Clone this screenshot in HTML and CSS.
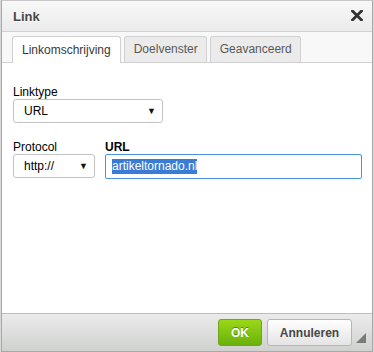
FILE: index.html
```html
<!DOCTYPE html>
<html lang="nl">
<head>
<meta charset="UTF-8">
<title>Link</title>
<link rel="stylesheet" href="styles.css">
</head>
<body>
<div class="dialog">
    <div class="title">
        <span>Link</span>
        <svg class="close" width="12" height="11" viewBox="0 0 12 11">
            <path d="M1.5 1 L10.5 10 M10.5 1 L1.5 10" stroke="#333" stroke-width="2.8" stroke-linecap="square"/>
        </svg>
    </div>
    <div class="tabs">
        <div class="tab active">Linkomschrijving</div>
        <div class="tab">Doelvenster</div>
        <div class="tab">Geavanceerd</div>
    </div>
    <div class="contents">
        <div class="field">
            <label>Linktype</label>
            <div class="select wide"><span>URL</span><span class="arrow">&#9660;</span></div>
        </div>
        <div class="row">
            <div class="field">
                <label>Protocol</label>
                <div class="select narrow"><span>http://</span><span class="arrow">&#9660;</span></div>
            </div>
            <div class="field grow">
                <label class="bold">URL</label>
                <div class="input"><span class="sel">artikeltornado.nl</span></div>
            </div>
        </div>
    </div>
    <div class="footer">
        <button class="btn ok">OK</button>
        <button class="btn cancel">Annuleren</button>
        <svg class="grip" width="10" height="10" viewBox="0 0 10 10">
            <path d="M10 0 L10 10 L0 10 Z" fill="#7a7a7a"/>
        </svg>
    </div>
</div>
</body>
</html>
```

FILE: styles.css
```css
body {
    margin: 0;
    background: #d8d8d8;
    font-family: "Liberation Sans", Arial, sans-serif;
    font-size: 12px;
}

.dialog {
    width: 370px;
    height: 350px;
    margin-left: 1px;
    border: 1px solid #a8a8a8;
    border-top-color: #c8c8c8;
    background: #fff;
    display: flex;
    flex-direction: column;
}

.title {
    height: 30px;
    background: linear-gradient(#f8f8f8, #ebebeb);
    border-bottom: 1px solid #d0d0d0;
    display: flex;
    align-items: center;
    justify-content: space-between;
    padding: 0 9px 0 11px;
    font-size: 13px;
    font-weight: bold;
    color: #474747;
    text-shadow: 0 1px 0 #fff;
}

.close {
    margin-top: -1px;
}

.tabs {
    height: 30px;
    background: #f8f8f8;
    border-bottom: 1px solid #d1d1d1;
    display: flex;
    align-items: flex-end;
    gap: 3px;
    padding-left: 10px;
}

.tab {
    height: 25px;
    line-height: 25px;
    padding: 0 8px 0 9px;
    border: 1px solid #d1d1d1;
    border-bottom: none;
    border-radius: 3px 3px 0 0;
    background: #ebebeb;
    color: #595959;
}

.tab.active {
    background: #fff;
    color: #383838;
    padding: 0 9px;
    height: 26px;
    line-height: 27px;
    margin-bottom: -1px;
}

.contents {
    flex: 1;
    padding: 22px 10px 0 11px;
    color: #000;
}

.field label {
    display: block;
    height: 14px;
    line-height: 14px;
    color: #000;
}

.field label.bold {
    font-weight: bold;
}

.row {
    display: flex;
    gap: 10px;
    margin-top: 17px;
}

.grow {
    flex: 1;
}

.select {
    height: 22px;
    border: 1px solid #c2c2c2;
    border-radius: 3px;
    display: flex;
    align-items: center;
    justify-content: space-between;
    padding: 0 6px 0 10px;
    box-sizing: content-box;
}

.select.wide {
    width: 132px;
}

.select.narrow {
    width: 64px;
}

.arrow {
    font-size: 9px;
    color: #111;
}

.input {
    height: 23px;
    border: 1px solid #4b94dc;
    border-radius: 2px;
    display: flex;
    align-items: center;
    padding-left: 6px;
}

.sel {
    background: #3a7bd5;
    color: #fff;
    line-height: 15px;
}

.footer {
    height: 37px;
    border-top: 1px solid #bdbdbd;
    background: linear-gradient(#ebebeb, #cfd1cf);
    display: flex;
    align-items: center;
    justify-content: flex-end;
    gap: 5px;
    padding-right: 5px;
    position: relative;
}

.btn {
    height: 27px;
    border-radius: 3px;
    font-family: "Liberation Sans", Arial, sans-serif;
    font-size: 12px;
    font-weight: bold;
    padding: 0;
}

.ok {
    width: 44px;
    border: 1px solid #6fa51f;
    background: linear-gradient(#9ad717, #69b10b);
    color: #fff;
    text-shadow: 0 -1px 0 #55830c;
}

.cancel {
    width: 85px;
    border: 1px solid #b6b6b6;
    background: linear-gradient(#fff, #e4e4e4);
    color: #474747;
    margin-right: 15px;
}

.grip {
    position: absolute;
    right: 6px;
    bottom: 8px;
}
```
